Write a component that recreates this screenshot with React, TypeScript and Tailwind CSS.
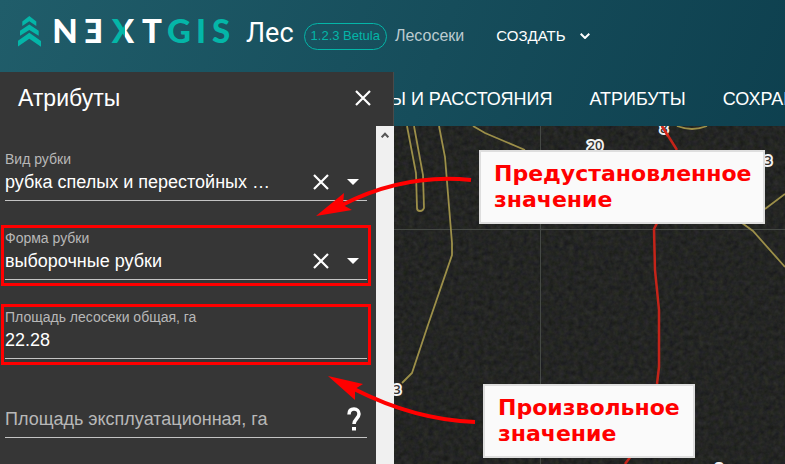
import { useState } from 'react';
import type { ReactNode } from 'react';

const sans = 'font-["Liberation_Sans",Arial,sans-serif]';

function Logo() {
  return (
    <svg viewBox="0 -4 214 56" className="h-14 w-[214px] shrink-0" role="img" aria-label="NextGIS">
      <defs>
        <linearGradient id="split" gradientUnits="userSpaceOnUse" x1="94" x2="116" y1="0" y2="0">
          <stop offset="0.58" stopColor="#04b6a8" />
          <stop offset="0.58" stopColor="#ffffff" />
        </linearGradient>
      </defs>
      <g transform="translate(-18 -12)">
        <path
          fill="#04b6a8"
          d="M29.3 16l7 5.4V26l-7-4.7-7 4.7v-4.6zM29.3 24.4l9.4 6.3v5l-9.4-5.7-9.3 5.7v-5zM29.3 32.7L41 41v5.7l-11.7-8-11.6 8V41z"
        />
      </g>
      <g fontFamily="Lato, sans-serif" fontWeight="900" fontSize="33" textAnchor="middle" fill="#fff">
        <text x="47" y="31">N</text>
        <text x="76" y="31">Ǝ</text>
        <text x="105" y="31" fill="url(#split)">X</text>
        <text x="134" y="31">T</text>
        <g fill="#04b6a8">
          <text x="161" y="31">G</text>
          <text x="183" y="31">I</text>
          <text x="203" y="31">S</text>
        </g>
      </g>
    </svg>
  );
}

function CrossIcon() {
  return (
    <svg viewBox="0 0 16 16" className="h-4 w-4" stroke="#fff" strokeWidth="2.200" aria-hidden="true">
      <path d="M1 1l14 14M15 1L1 15" />
    </svg>
  );
}

function Field({ id, label, marked, children }: { id: string; label: string; marked?: boolean; children: ReactNode }) {
  return (
    <div className="relative mb-7 border-b border-[#c4c4c4] pb-0.5">
      {marked && <div className="pointer-events-none absolute -inset-x-1 -top-1 -bottom-[7px] border-3 border-[#ff0000]" />}
      <label htmlFor={id} className="block pt-px text-[14px] leading-4 text-[#b8b8b8]">
        {label}
      </label>
      <div className="flex h-[31px] items-center pb-px">{children}</div>
    </div>
  );
}

function PickField({ id, label, options, marked }: { id: string; label: string; options: string[]; marked?: boolean }) {
  const [value, setValue] = useState(options[0]);
  return (
    <Field id={id} label={label} marked={marked}>
      <select
        id={id}
        value={value}
        onChange={(e) => setValue(e.target.value)}
        className="min-w-0 flex-1 appearance-none bg-transparent text-[18px] leading-6 text-white outline-none"
      >
        <option value="" />
        {options.map((o) => (
          <option key={o} className="bg-[#363636]">
            {o}
          </option>
        ))}
      </select>
      <button type="button" aria-label="Очистить" onClick={() => setValue('')} className="mr-[18px]">
        <CrossIcon />
      </button>
      <svg viewBox="0 0 12 6" className="mr-2 h-1.5 w-3" aria-hidden="true">
        <path d="M0 0h12L6 6z" fill="#fff" />
      </svg>
    </Field>
  );
}

function AttributesPanel() {
  return (
    <aside className="flex w-[394px] shrink-0 flex-col bg-[#363636] text-white">
      <div className="flex h-[54px] shrink-0 items-center justify-between border-r border-[#4a4a4a] pr-[22px] pb-0.5 pl-[18px]">
        <h2 className="text-[23px] leading-8">Атрибуты</h2>
        <button type="button" aria-label="Закрыть">
          <CrossIcon />
        </button>
      </div>
      <div className="flex flex-1">
        <form className="min-w-0 flex-1 pt-6 pr-[9px] pl-[5px]">
          <PickField id="kind" label="Вид рубки" options={['рубка спелых и перестойных …']} />
          <PickField id="form" label="Форма рубки" options={['выборочные рубки']} marked />
          <Field id="area" label="Площадь лесосеки общая, га" marked>
            <input id="area" defaultValue="22.28" className="w-full bg-transparent text-[18px] leading-6 outline-none" />
          </Field>
          <div className="flex h-[51px] items-end border-b border-[#c4c4c4] pb-0.5">
            <input
              aria-label="Площадь эксплуатационная, га"
              placeholder="Площадь эксплуатационная, га"
              className="h-8 min-w-0 flex-1 bg-transparent text-[18px] leading-6 outline-none placeholder:text-[#b8b8b8]"
            />
            <button type="button" aria-label="Справка" className="mr-1.5 mb-1">
              <svg viewBox="0 0 14 24" className="h-6 w-3.5" fill="none" stroke="#fff" strokeWidth="3.500" aria-hidden="true">
                <path d="M2 7.500C2 4 4 2 7 2s5 2 5 5c0 4.500-5 5-5 10" />
                <path d="M7 20v3.500" strokeWidth="4" />
              </svg>
            </button>
          </div>
        </form>
        <div className="flex w-[18px] justify-center bg-[#f0f0f0] pt-1.5">
          <svg viewBox="0 0 8 6" className="h-1.5 w-2" fill="none" stroke="#555" strokeWidth="2" aria-hidden="true">
            <path d="M.7 5.300L4 1.700l3.300 3.600" />
          </svg>
        </div>
      </div>
    </aside>
  );
}

function Terrain() {
  return (
    <svg className="absolute inset-0 h-full w-full" aria-hidden="true">
      <defs>
        <filter id="grain" x="0" y="0" width="100%" height="100%" colorInterpolationFilters="sRGB">
          <feTurbulence type="fractalNoise" baseFrequency="0.2" numOctaves="3" seed="4" />
          <feColorMatrix values="0.1 0.03 0 0 0.075  0.08 0.06 0 0 0.075  0.08 0 0.06 0 0.068  0 0 0 0 1" />
        </filter>
      </defs>
      <rect width="100%" height="100%" fill="#252725" />
      <rect width="100%" height="100%" filter="url(#grain)" />
      <g transform="translate(-394 -126)" fill="none">
        <path d="M540.500 126v400M394 229.500h900" stroke="#454945" />
        <g stroke="#9c8f49" strokeWidth="1.800">
          <path d="M407 126l9 47 1 35q0 3 3 3t4-3l-1-33-9-49M439 126l6 31 7 86v12l-24 70-16 48-10 10M473 126l12 7 40 17M677 126q15 6 30 0M785 194l-20 15M742 223l11 8 32 36" />
        </g>
        <path d="M662 126l15 24M657 223l-3 6 1 41 4 40v57l-2 17M631 456l-6 8" stroke="#c42419" strokeWidth="2.500" />
        <g
          fontFamily="Open Sans, sans-serif"
          fontSize="13"
          fontWeight="600"
          fill="#333"
          stroke="#f4f4f4"
          strokeWidth="4"
          strokeLinejoin="round"
          paintOrder="stroke"
          textAnchor="middle"
        >
          <text x="595" y="150">20</text>
          <text x="664" y="133">8</text>
          <text x="768" y="165">3</text>
          <text x="397" y="394">3</text>
          <text x="719" y="473">8</text>
        </g>
        <path d="M662 126l6 10" stroke="#d8281c" strokeWidth="2.500" />
      </g>
    </svg>
  );
}

function Arrows() {
  return (
    <svg className="pointer-events-none absolute top-0 left-0 h-[464px] w-[480px]" fill="none" stroke="#ff0000" aria-hidden="true">
      <path d="M471 180Q405 173 342 205" strokeWidth="4" />
      <path d="M316 216l28-23-1 12 9 5z" fill="#ff0000" stroke="none" />
      <path d="M475 422Q415 420 354 389" strokeWidth="4" />
      <path d="M328 376l35 8-8 5v11z" fill="#ff0000" stroke="none" />
    </svg>
  );
}

const callout =
  'absolute border-2 border-[#dedede] bg-[#fafafa] pt-[9px] pb-[9px] pl-[13px] font-["DejaVu_Sans",Verdana,sans-serif] text-[22px] leading-[26px] font-bold text-[#ff0000]';

export default function App() {
  return (
    <div className={`relative flex min-h-screen flex-col overflow-hidden bg-linear-110 from-[#205d6a] to-[#0b3c4b] ${sans}`}>
      <header className="flex h-[72px] shrink-0 items-center pl-[18px] text-white">
        <Logo />
        <span className='ml-3.5 pb-1.5 font-["Roboto",sans-serif] text-[27px] leading-8'>Лес</span>
        <span className="ml-2.5 flex h-[27px] items-center rounded-full border border-[#04b6a8] px-1.5 text-[13px] text-[#04b6a8]">
          1.2.3 Betula
        </span>
        <span className="ml-2 text-[16px] text-[#bccbd0]">Лесосеки</span>
        <button type="button" className="ml-8 flex items-center gap-3.5 text-[15px]">
          СОЗДАТЬ
          <svg viewBox="0 0 10 6" className="h-1.5 w-2.5" fill="none" stroke="#fff" strokeWidth="2" aria-hidden="true">
            <path d="M.7.7L5 5 9.300.7" />
          </svg>
        </button>
      </header>
      <div className="flex flex-1">
        <AttributesPanel />
        <div className="flex min-w-0 flex-1 flex-col">
          <nav className="flex h-[54px] shrink-0 items-center gap-[37px] overflow-hidden text-[18px] whitespace-nowrap text-white">
            <a href="#distances" className="-ml-1">
              Ы И РАССТОЯНИЯ
            </a>
            <a href="#attributes">АТРИБУТЫ</a>
            <a href="#save">СОХРАНИТЬ</a>
          </nav>
          <main className="relative flex-1 overflow-hidden">
            <Terrain />
            <div className={`${callout} top-6 left-[85px] w-[286px]`}>
              Предустановленное
              <br />
              значение
            </div>
            <div className={`${callout} top-[258px] left-[89px] w-[212px]`}>
              Произвольное
              <br />
              значение
            </div>
          </main>
        </div>
      </div>
      <Arrows />
    </div>
  );
}
